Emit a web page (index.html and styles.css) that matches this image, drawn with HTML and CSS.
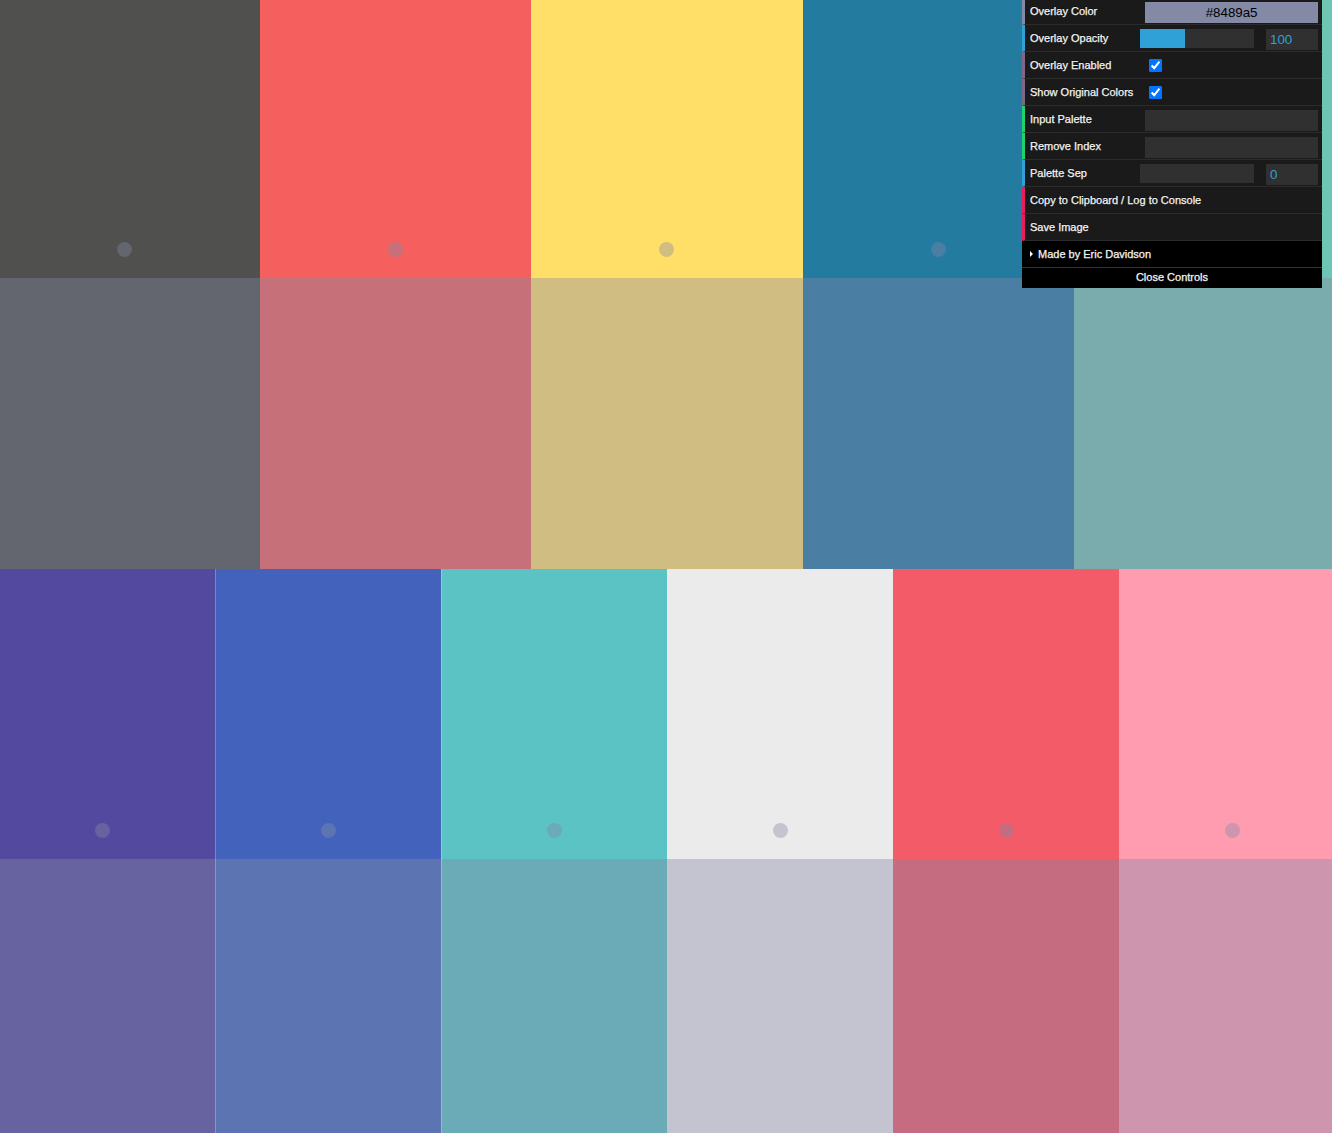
FILE: index.html
```html
<!DOCTYPE html>
<html>
<head>
<meta charset="utf-8">
<title>Palette Overlay</title>
<link rel="stylesheet" href="styles.css">
</head>
<body>
<div class="canvas">
  <div class="palette five">
    <div class="swatch"><div class="orig c1a"><span class="dot o1a"></span></div><div class="over o1a"></div></div>
    <div class="swatch"><div class="orig c1b"><span class="dot o1b"></span></div><div class="over o1b"></div></div>
    <div class="swatch"><div class="orig c1c"><span class="dot o1c"></span></div><div class="over o1c"></div></div>
    <div class="swatch"><div class="orig c1d"><span class="dot o1d"></span></div><div class="over o1d"></div></div>
    <div class="swatch"><div class="orig c1e"><span class="dot o1e"></span></div><div class="over o1e"></div></div>
  </div>
  <div class="palette six">
    <div class="swatch"><div class="orig c2a"><span class="dot o2a"></span></div><div class="over o2a"></div></div>
    <div class="swatch seam"><div class="orig c2b"><span class="dot o2b"></span></div><div class="over o2b"></div></div>
    <div class="swatch seam"><div class="orig c2c"><span class="dot o2c"></span></div><div class="over o2c"></div></div>
    <div class="swatch"><div class="orig c2d"><span class="dot o2d"></span></div><div class="over o2d"></div></div>
    <div class="swatch"><div class="orig c2e"><span class="dot o2e"></span></div><div class="over o2e"></div></div>
    <div class="swatch"><div class="orig c2f"><span class="dot o2f"></span></div><div class="over o2f"></div></div>
  </div>
</div>

<div class="gui">
  <ul class="gui-list">
    <li class="cr color">
      <span class="name">Overlay Color</span>
      <div class="ctl"><div class="txt colorbox">#8489a5</div></div>
    </li>
    <li class="cr number">
      <span class="name">Overlay Opacity</span>
      <div class="ctl slider-ctl">
        <div class="slider"><div class="fg"></div></div>
        <div class="txt num">100</div>
      </div>
    </li>
    <li class="cr boolean">
      <span class="name">Overlay Enabled</span>
      <div class="ctl"><input type="checkbox" class="chk" checked></div>
    </li>
    <li class="cr boolean">
      <span class="name">Show Original Colors</span>
      <div class="ctl"><input type="checkbox" class="chk" checked></div>
    </li>
    <li class="cr string">
      <span class="name">Input Palette</span>
      <div class="ctl"><div class="txt field"></div></div>
    </li>
    <li class="cr string">
      <span class="name">Remove Index</span>
      <div class="ctl"><div class="txt field"></div></div>
    </li>
    <li class="cr number">
      <span class="name">Palette Sep</span>
      <div class="ctl slider-ctl">
        <div class="slider"></div>
        <div class="txt num">0</div>
      </div>
    </li>
    <li class="cr function"><span class="name wide">Copy to Clipboard / Log to Console</span></li>
    <li class="cr function"><span class="name wide">Save Image</span></li>
    <li class="title">Made by Eric Davidson</li>
  </ul>
  <div class="close-button">Close Controls</div>
</div>
</body>
</html>
```

FILE: styles.css
```css
html, body {
  margin: 0;
  padding: 0;
  overflow: hidden;
  background: #ffffff;
}

.canvas {
  width: 1356px;
  margin: -12px 0 0 -11px;
}

.palette {
  display: grid;
}
.palette.five { grid-template-columns: repeat(5, 1fr); }
.palette.six { grid-template-columns: repeat(6, 1fr); }

.swatch {
  display: flex;
  flex-direction: column;
}
.five .orig { height: 290px; }
.five .over { height: 291px; }
.six .orig { height: 290px; }
.six .over { height: 290px; }

.orig {
  position: relative;
  display: flex;
  justify-content: center;
}
.dot {
  position: absolute;
  bottom: 21px;
  width: 15px;
  height: 15px;
  border-radius: 50%;
}
.seam .orig, .seam .over {
  box-shadow: inset 1px 0 0 rgba(255, 255, 255, 0.25);
}

/* originals */
.c1a { background: #50504e; }
.c1b { background: #f5605e; }
.c1c { background: #ffdf67; }
.c1d { background: #237ba0; }
.c1e { background: #6fc5b3; }
.c2a { background: #534aa0; }
.c2b { background: #4262bb; }
.c2c { background: #5bc3c3; }
.c2d { background: #ebebeb; }
.c2e { background: #f35b69; }
.c2f { background: #ff9caf; }

/* overlays */
.o1a { background: #63666f; }
.o1b { background: #c6707a; }
.o1c { background: #cfbd82; }
.o1d { background: #4a7fa3; }
.o1e { background: #7aabad; }
.o2a { background: #6762a0; }
.o2b { background: #5c74b2; }
.o2c { background: #6aabb7; }
.o2d { background: #c3c4d0; }
.o2e { background: #c66c81; }
.o2f { background: #ce96ae; }

/* control panel */
.gui {
  position: absolute;
  top: -2px;
  right: 10px;
  width: 300px;
  font: 11px "Liberation Sans", Arial, sans-serif;
  color: #f4f4f4;
  text-shadow: 0 -1px 0 #111111;
  -webkit-text-stroke: 0.25px #f4f4f4;
}
.gui-list {
  list-style: none;
  margin: 0;
  padding: 0;
}
.cr {
  display: flex;
  align-items: flex-start;
  height: 26px;
  background: #1a1a1a;
  border-bottom: 1px solid #2c2c2c;
  border-left: 3px solid #1a1a1a;
  padding: 0 4px 0 5px;
}
.cr.color { border-left-color: #8489a5; }
.cr.number { border-left-color: #2fa1d6; }
.cr.boolean { border-left-color: #806787; }
.cr.string { border-left-color: #1ed36f; }
.cr.function { border-left-color: #e61d5f; }

.name {
  width: 40%;
  flex: none;
  line-height: 26px;
  white-space: nowrap;
  overflow: visible;
}
.name.wide { width: 100%; }

.ctl {
  width: 60%;
  flex: none;
  height: 26px;
  display: flex;
  align-items: flex-start;
}
.txt {
  margin-top: 4px;
  height: 21px;
  box-sizing: border-box;
  background: #303030;
  font: 13.33px "Liberation Sans", Arial, sans-serif;
  line-height: 21px;
  text-shadow: none;
  -webkit-text-stroke: 0;
}
.colorbox {
  width: 100%;
  background: #8489a5;
  color: #000000;
  text-align: center;
}
.field { width: 100%; }

.slider-ctl {
  justify-content: space-between;
}
.slider {
  margin: 4px 0 0 -5px;
  width: 114px;
  height: 19px;
  background: #303030;
}
.slider .fg {
  width: 45px;
  height: 100%;
  background: #2fa1d6;
}
.num {
  width: 52px;
  color: #2fa1d6;
  padding-left: 4px;
}

.chk {
  margin: 7px 0 0 4px;
  width: 13px;
  height: 13px;
}

.title {
  position: relative;
  height: 26px;
  line-height: 26px;
  background: #000000;
  border-bottom: 1px solid rgba(255, 255, 255, 0.2);
  padding-left: 16px;
}
.title::before {
  content: "";
  position: absolute;
  left: 8px;
  top: 10px;
  border-left: 3px solid #ffffff;
  border-top: 3px solid transparent;
  border-bottom: 3px solid transparent;
}

.close-button {
  height: 20px;
  line-height: 19px;
  background: #000000;
  text-align: center;
}
```
